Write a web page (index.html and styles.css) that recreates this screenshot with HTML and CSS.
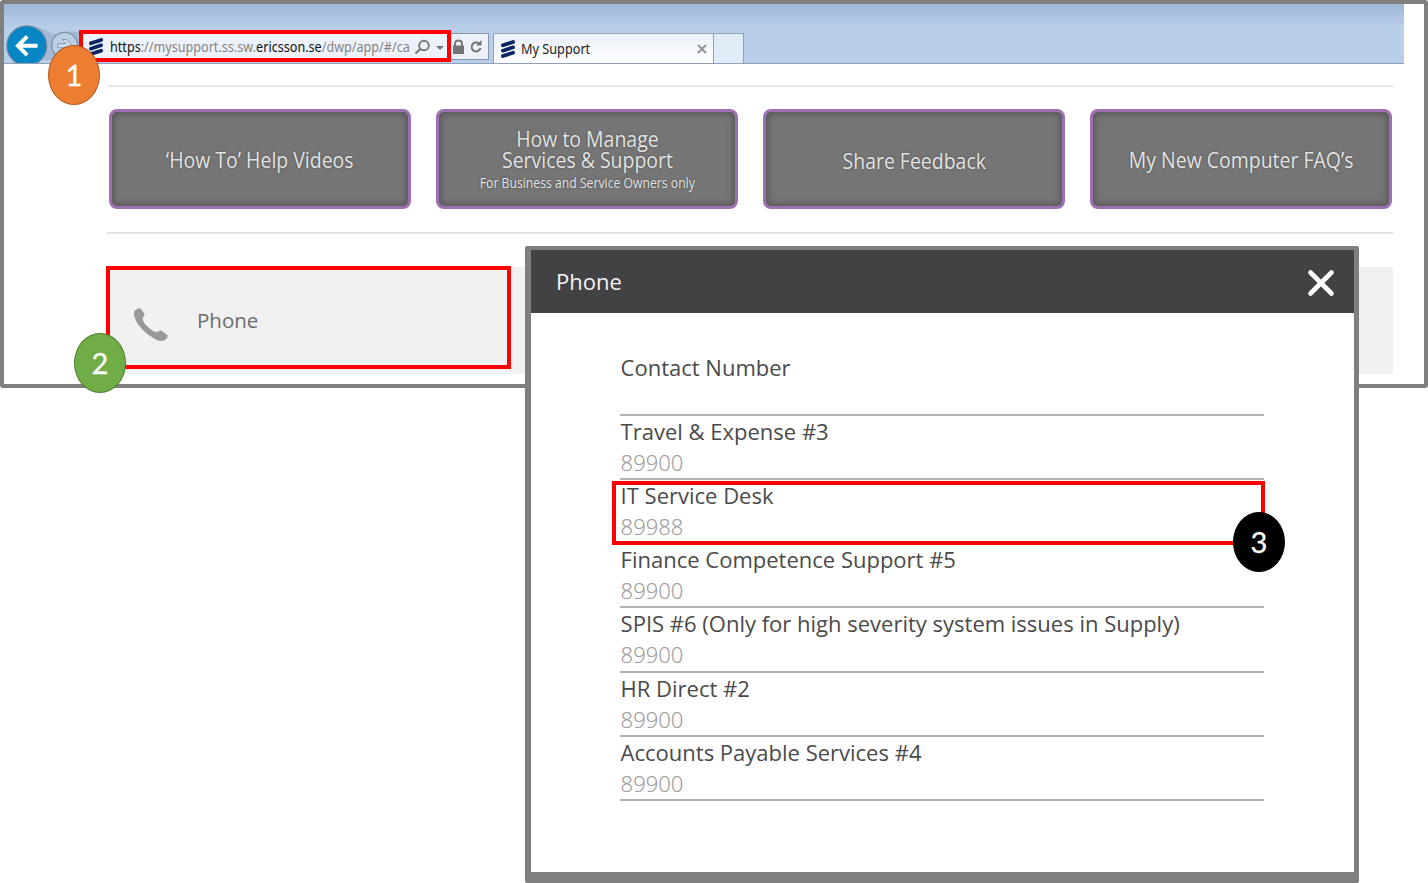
FILE: index.html
```html
<!DOCTYPE html>
<html lang="en">
<head>
<meta charset="utf-8">
<title>My Support</title>
<link rel="stylesheet" href="styles.css">
</head>
<body>
<svg class="defs" width="0" height="0">
  <symbol id="logo" viewBox="0 0 14 18"><path d="M1.9 5.3 12.1 1.9M1.9 10.7 12.1 7.3M1.9 16.1 12.1 12.7" stroke="#0b2560" stroke-width="3.7" stroke-linecap="round"/></symbol>
</svg>
<main class="stage">
  <section class="window">
    <header class="chrome">
      <svg class="nav" width="76" height="60" viewBox="4 4 76 60">
        <path d="M26 27Q38 25 49 33Q55 36 65 32L80 32V61H40z" fill="#a5b9d4"/>
        <circle cx="65" cy="46" r="13.2" fill="#bed0e8" stroke="#8194ae" stroke-width="1.4"/>
        <path d="M58 44.500h8.500l-4-4.500h4.500l6 6.500-6 6.500h-4.500l4-4.500h-8.500z" fill="#cfdef0" stroke="#8799b0"/>
        <circle cx="26.500" cy="46.500" r="20.300" fill="#0786c6" stroke="#71899d" stroke-width="1.200"/>
        <path d="M37.500 46.500H18M27 37l-9.500 9.500 9.500 9.500" fill="none" stroke="#fff" stroke-width="4"/>
      </svg>
      <div class="address">
        <svg class="mark" width="14" height="18"><use href="#logo"/></svg>
        <span class="url"><b>https</b>://mysupport.ss.sw.<b>ericsson.se</b>/dwp/app/#/ca</span>
        <svg class="tools" width="76" height="26" viewBox="412 34 76 26">
          <circle cx="424" cy="45.500" r="4.800" fill="none" stroke="#777" stroke-width="1.900"/>
          <path d="M420.500 49l-5 4.500" stroke="#777" stroke-width="2.300"/>
          <path d="M436 46h8l-4 4z" fill="#777"/>
          <path d="M455 46v-2q0-3.500 3.500-3.500T462 44v2" fill="none" stroke="#747474" stroke-width="1.800"/>
          <rect x="453" y="45.500" width="11" height="8.500" fill="#747474"/>
          <path d="M479 43.500a4.500 4.500 0 1 0 1.500 4.500" fill="none" stroke="#747474" stroke-width="2"/>
          <path d="M476 45.500h5.500V40z" fill="#747474"/>
        </svg>
      </div>
      <div class="tab">
        <svg class="mark" width="14" height="18"><use href="#logo"/></svg>
        <span class="tab-title">My Support</span>
        <svg class="tab-close" width="10" height="10"><path d="M1 1l8 8M9 1l-8 8" stroke="#949494" stroke-width="2"/></svg>
      </div>
      <div class="new-tab"></div>
    </header>
    <div class="page">
      <nav class="links">
        <a class="link"><span>‘How To’ Help Videos</span></a>
        <a class="link low"><span>How to Manage<br>Services &amp; Support</span><small>For Business and Service Owners only</small></a>
        <a class="link low"><span>Share Feedback</span></a>
        <a class="link"><span>My New Computer FAQ’s</span></a>
      </nav>
      <div class="contact">
        <svg width="36" height="36" viewBox="0 0 36 36"><path d="M2 3.500Q4.500 1 7.500 1.200L11.500 7Q12 8.500 9.500 11Q10 16 15.500 20.500Q20.500 25 24.500 25Q26.500 23 28 23.500L34.500 28Q35.500 30 32.500 32.500Q28 36 21 31.500Q9 24.500 3 14Q-0.500 7 2 3.500Z" fill="#999"/></svg>
        <span>Phone</span>
      </div>
    </div>
  </section>

  <section class="modal">
    <header class="modal-head"><h1>Phone</h1>
      <svg width="28" height="28" viewBox="0 0 28 28"><path d="M3.500 3.500l21 21M24.500 3.500L3.500 24.500" stroke="#fff" stroke-width="4.600" stroke-linecap="round"/></svg>
    </header>
    <div class="modal-body">
      <h2>Contact Number</h2>
      <ul class="numbers">
        <li><span>Travel &amp; Expense #3</span><em>89900</em></li>
        <li><span>IT Service Desk</span><em>89988</em></li>
        <li><span>Finance Competence Support #5</span><em>89900</em></li>
        <li><span>SPIS #6 (Only for high severity system issues in Supply)</span><em>89900</em></li>
        <li><span>HR Direct #2</span><em>89900</em></li>
        <li><span>Accounts Payable Services #4</span><em>89900</em></li>
      </ul>
    </div>
  </section>

  <div class="frame frame-url"></div>
  <div class="frame frame-phone"></div>
  <div class="frame frame-desk"></div>
  <div class="badge badge-1">1</div>
  <div class="badge badge-2">2</div>
  <div class="badge badge-3">3</div>
</main>
</body>
</html>
```
FILE: styles.css
```css
* { box-sizing: border-box; }
body { margin: 0; background: #fff; font-family: "Open Sans", "Noto Sans", sans-serif; overflow: hidden; }
.defs { display: block; height: 0; }
.stage { position: relative; width: 1428px; height: 883px; overflow: hidden; }

.window { width: 1428px; height: 388px; border: 4px solid #7f7f7f; border-radius: 3px; background: #fff; }
.chrome { display: flex; align-items: flex-end; width: 1400px; height: 60px; border-bottom: 1px solid #8fa3b8; background: linear-gradient(#9db8d5, #b9cfe9 24px, #b9cfe9); }
.nav { align-self: flex-start; width: 76px; height: 59px; flex: none; }
.address { display: flex; align-items: center; width: 409px; height: 27px; margin-bottom: 3px; padding-left: 8px; background: #edf2fa; border: 1px solid #8495ac; }
.mark { flex: none; }
.url { width: 302px; margin-left: 7px; padding-top: 1px; font: 13.5px/20px "Noto Sans", sans-serif; color: #858585; white-space: nowrap; transform: scaleX(.934); transform-origin: left; }
.url b { font-weight: 400; color: #111; }
.tools { flex: none; }
.tab { display: flex; align-items: center; width: 221px; height: 30px; margin-left: 4px; padding: 0 6px 0 7px; background: linear-gradient(#e9f0f8, #fff); border: 1px solid #8fa3b8; border-bottom: 0; }
.tab-title { flex: 1; margin-left: 6px; padding-top: 1px; font: 13.5px/20px "Noto Sans", sans-serif; color: #222; transform: scaleX(.94); transform-origin: left; }
.new-tab { width: 30px; height: 30px; background: #e0ebf8; border: 1px solid #8fa3b8; border-width: 1px 1px 0 0; }

.page { width: 1286px; margin: 21px 0 0 103px; }
.links { display: grid; grid-template-columns: repeat(4, 302px); column-gap: 25px; height: 149px; padding: 22px 0 0 2px; border-top: 2px solid #e8e8e8; border-bottom: 2px solid #e3e3e3; }
.link { display: flex; flex-direction: column; align-items: center; justify-content: center; height: 100px; background: #757575; border: 3px solid #9d70b2; border-radius: 8px; box-shadow: inset 0 0 7px 1px #505050; color: #e4e4e4; font-size: 21.5px; line-height: 21px; text-align: center; white-space: nowrap; text-shadow: 0 0 2px #444; }
.link span { transform: scaleX(.905); }
.link.low { padding-top: 2px; }
.link small { margin-top: 4px; font-size: 14px; line-height: 18px; transform: scaleX(.872); }
.contact { display: flex; align-items: center; height: 107px; margin-top: 33px; padding-left: 26px; background: #f1f1f1; color: #6c6c6c; font-size: 20.5px; }
.contact svg { margin: 9px 28px 0 0; }
.contact span { margin-top: -2px; }

.modal { position: absolute; left: 525px; top: 246px; width: 834px; height: 637px; border: 5px solid #7f7f7f; border-top-width: 4px; border-left-width: 6px; border-bottom-width: 11px; border-radius: 2px; background: #fff; }
.modal-head { display: flex; align-items: center; justify-content: space-between; height: 63px; padding: 0 19px 0 25px; background: #424143; color: #f4f4f4; }
.modal-head h1 { margin: -2px 0 0; font-size: 22px; font-weight: 400; }
.modal-head svg { margin-top: 3px; }
.modal-body { padding: 39.4px 90px 0 89px; color: #4a4a4a; }
.modal-body h2 { height: 61.2px; margin: 0; padding-left: .6px; font-size: 22px; font-weight: 400; line-height: 31px; }
.numbers { display: flex; flex-direction: column; margin: 0; padding: 0; list-style: none; border-top: 2px solid #b2b2b2; font-size: 22px; }
.numbers li { display: flex; flex-direction: column; height: 64.3px; padding-left: .6px; border-bottom: 2px solid #b2b2b2; line-height: 31px; white-space: nowrap; }
.numbers em { color: #999; font-style: normal; font-weight: 300; -webkit-text-stroke: .2px #aaa; }

.frame { position: absolute; border: 4px solid #f00; }
.frame-url { left: 79px; top: 30px; width: 372px; height: 32px; }
.frame-phone { left: 106px; top: 266px; width: 405px; height: 103px; }
.frame-desk { left: 612px; top: 481px; width: 653px; height: 64px; }
.badge { position: absolute; display: flex; align-items: center; justify-content: center; width: 52px; height: 60px; padding-bottom: 2px; border: 1px solid; border-radius: 50%; color: #fff; font: 29px/1 Lato, sans-serif; -webkit-text-stroke: .3px #fff; }
.badge-1 { left: 48px; top: 45px; background: #ed7d31; border-color: #ae5a21; }
.badge-2 { left: 74px; top: 333px; background: #70ad47; border-color: #507e32; }
.badge-3 { left: 1233px; top: 512px; background: #000; border-color: #000; }
```
